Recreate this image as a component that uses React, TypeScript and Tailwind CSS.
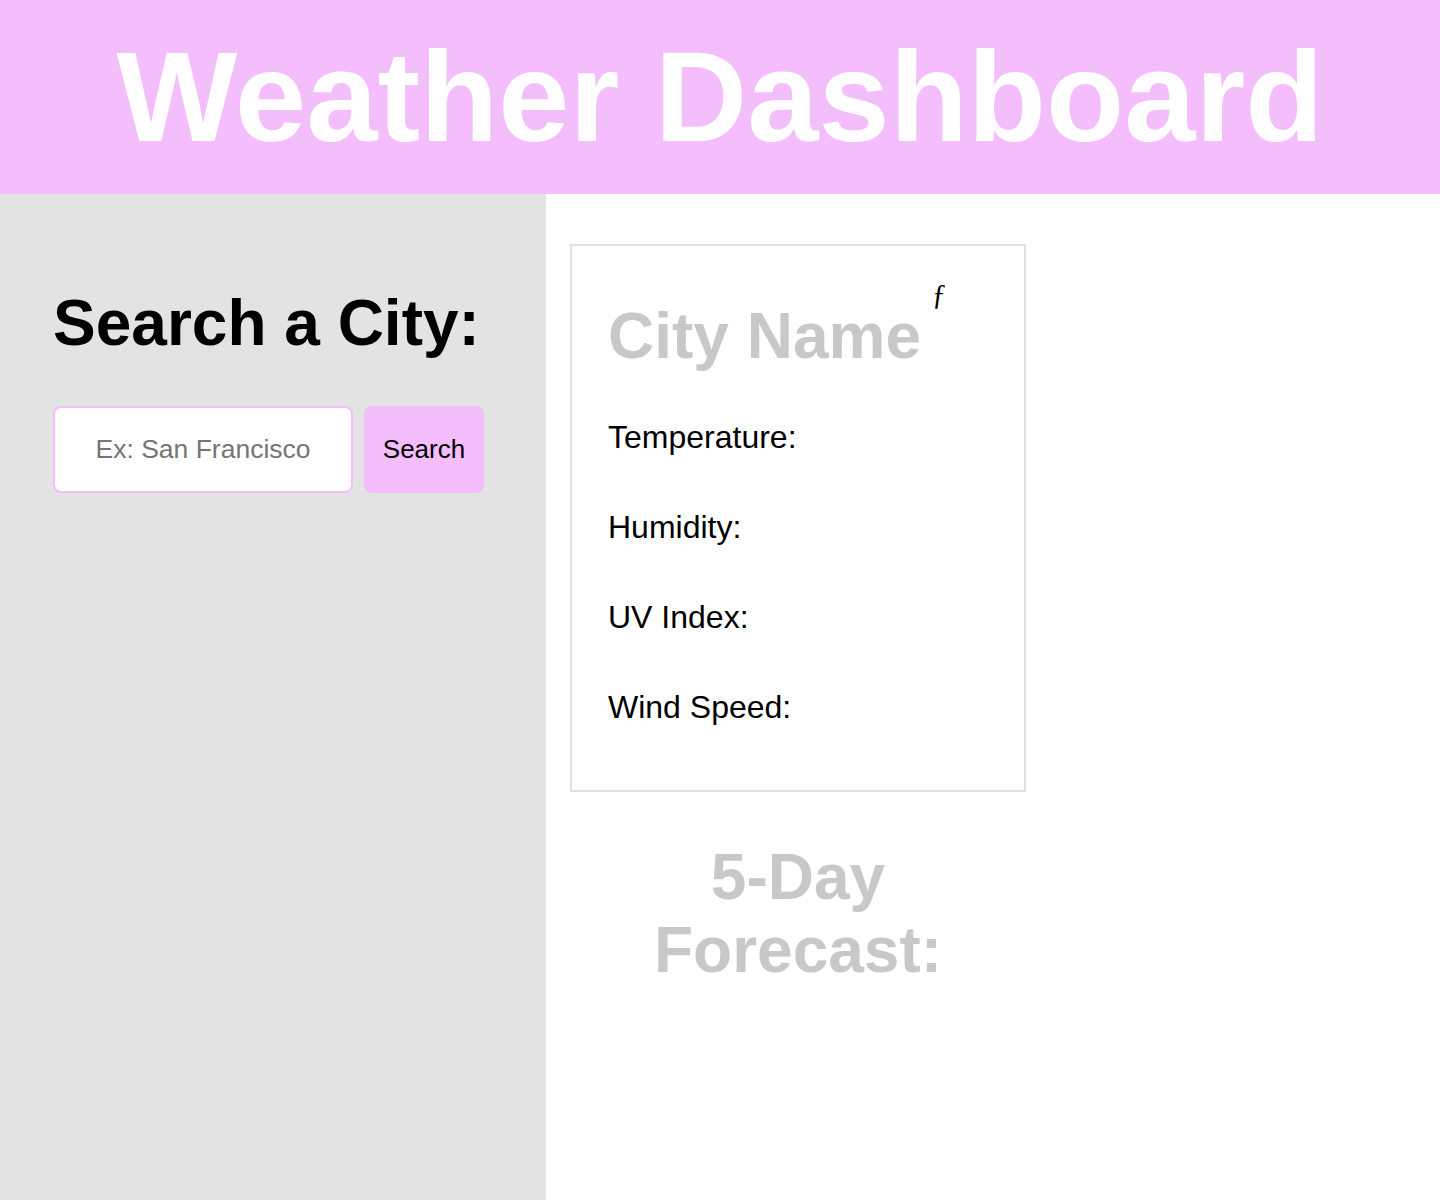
import React from "react";

const font = { fontFamily: '"Liberation Sans", Arial, sans-serif' };

const labels = ["Temperature:", "Humidity:", "UV Index:", "Wind Speed:"];

const App = () => {
  return (
    <div className="flex min-h-screen flex-col bg-white text-black" style={font}>
      <header className="flex h-[194px] items-center justify-center bg-[#f4befd]">
        <h1 className="text-[128px] font-bold leading-none text-white">Weather Dashboard</h1>
      </header>

      <div className="flex flex-1">
        <aside className="w-[546px] shrink-0 bg-[#e3e3e3] pl-[53px] pt-[97px]">
          <h2 className="text-[64px] font-bold leading-none">Search a City:</h2>
          <div className="mt-[51px] flex gap-[11px]">
            <input
              type="text"
              placeholder="Ex: San Francisco"
              className="h-[87px] w-[300px] rounded-lg border-2 border-[#f4befd] bg-white text-center text-[26.5px] outline-none placeholder:text-[#757575]"
            />
            <button className="h-[87px] w-[120px] rounded-lg bg-[#f4befd] text-[26px] text-black">
              Search
            </button>
          </div>
        </aside>

        <main className="ml-[24px] pt-[50px]">
          <div className="h-[548px] w-[456px] border-2 border-[#e1e1e1] pl-[36px] pt-[58px]">
            <div className="flex items-start">
              <h2 className="text-[64px] font-bold leading-none text-[#c8c8c8]">City Name</h2>
              <span
                className="ml-[11px] mt-[-24px] text-[29px] leading-none"
                style={{ fontFamily: '"Liberation Serif", "Times New Roman", serif' }}
              >
                ƒ
              </span>
            </div>
            <div className="mt-[53px] flex flex-col gap-[58px]">
              {labels.map((l) => (
                <p key={l} className="text-[32px] leading-none">
                  {l}
                </p>
              ))}
            </div>
          </div>
          <h2 className="mt-[49px] w-[456px] text-center text-[64px] font-bold leading-[73px] text-[#c8c8c8]">
            5-Day
            <br />
            Forecast:
          </h2>
        </main>
      </div>
    </div>
  );
};

export default App;
